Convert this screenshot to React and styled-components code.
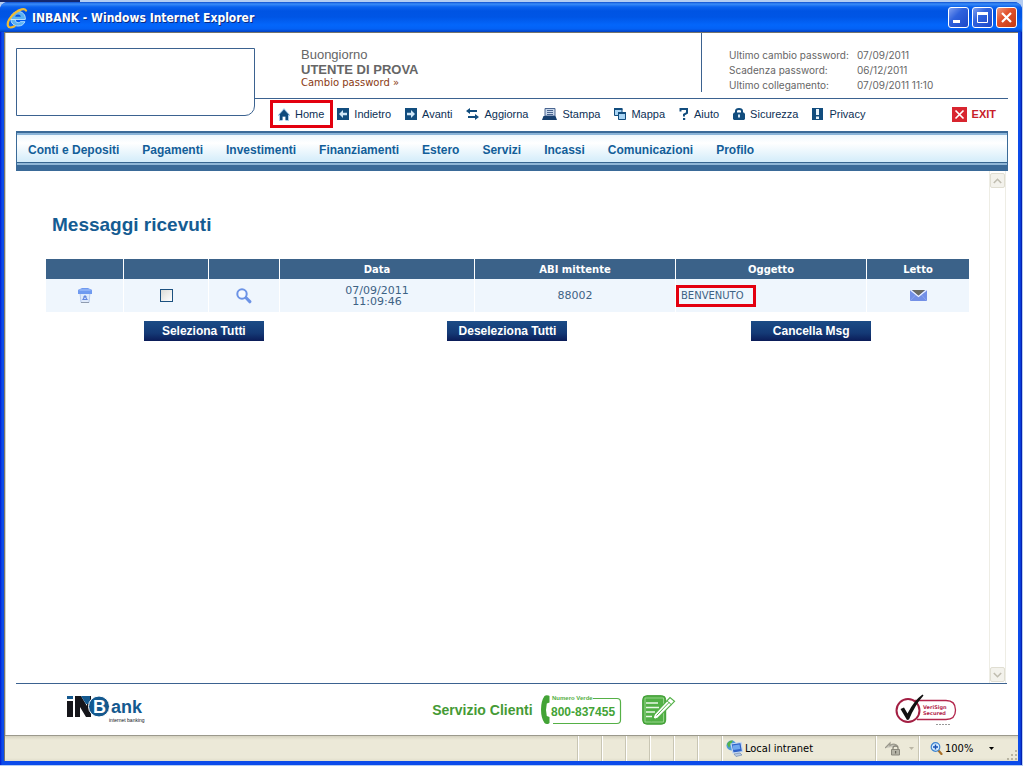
import styled, { createGlobalStyle, css } from "styled-components";

const GlobalStyle = createGlobalStyle`
  *, *::before, *::after {
    box-sizing: border-box;
  }
  body {
    margin: 0;
    background: #b4cdf2;
    font-family: "Liberation Sans", Arial, sans-serif;
    font-size: 11px;
    color: #0c3a66;
  }
  button {
    font: inherit;
    color: inherit;
    padding: 0;
    border: 0;
    background: none;
  }
  a {
    color: inherit;
    text-decoration: none;
  }
  svg {
    display: block;
    flex: none;
  }
`;

const messages = [
  { date: "07/09/2011", time: "11:09:46", abi: "88002", subject: "BENVENUTO" },
];

const columns = [
  { label: "", width: 77 },
  { label: "", width: 85 },
  { label: "", width: 71 },
  { label: "Data", width: 195 },
  { label: "ABI mittente", width: 201 },
  { label: "Oggetto", width: 191 },
  { label: "Letto", width: 103 },
];

const sections = [
  "Conti e Depositi",
  "Pagamenti",
  "Investimenti",
  "Finanziamenti",
  "Estero",
  "Servizi",
  "Incassi",
  "Comunicazioni",
  "Profilo",
];

const access = [
  ["Ultimo cambio password:", "07/09/2011"],
  ["Scadenza password:", "06/12/2011"],
  ["Ultimo collegamento:", "07/09/2011 11:10"],
];

/* ---------- icons ---------- */

const IeIcon = () => (
  <svg width="22" height="22" viewBox="0 0 22 22">
    <path d="M4.500 12.500h14.800c.5-5-3-8-7-8-4.300 0-7.500 3.200-7.500 7.300 0 4.300 3 7.200 7.400 7.200 3.200 0 5.600-1.500 6.700-4.300h-4.500c-.6.8-1.300 1-2.200 1-1.700 0-2.800-1-3-3.200z" fill="#5cb2f2" stroke="#bfe4ff" strokeWidth=".9" />
    <path d="M9.200 9.700c.3-1.400 1.300-2.200 2.800-2.200 1.600 0 2.600.8 2.800 2.200z" fill="#0a51dd" />
    <path d="M20 3.500C18.500.8 13.500 2.300 9 5.800 4 9.700.8 15.500 2 18.800c.8 2.300 3.800 2 6.500.5" fill="none" stroke="#f0bc35" strokeWidth="2.200" strokeLinecap="round" />
  </svg>
);

const HomeIcon = () => (
  <svg width="12" height="13" viewBox="0 0 12 13">
    <path d="M6 0 0 7v1h1v5h3.500V9h3v4H11V8h1V7z" fill="#a9cdea" />
    <path d="M6 1.500 1 7h1v5h2.500V8.500h3V12H10V7h1z" fill="#0f4a7c" />
  </svg>
);

const ArrowIcon = ({ right }) => (
  <svg width="12" height="12" viewBox="0 0 12 12">
    <path d="M0 0h12v12H0z" fill="#124d7e" />
    <path
      d="M2 6l4-4v2.700h4v2.600H6V10z"
      transform={right ? "rotate(180 6 6)" : undefined}
      fill="#cfe6f7"
    />
  </svg>
);

const RefreshIcon = () => (
  <svg width="13" height="12" viewBox="0 0 13 12">
    <path d="M4 0v2h7v2H4v2L0 3zM9 6v2H2v2h7v2l4-3z" fill="#124d7e" />
  </svg>
);

const PrintIcon = () => (
  <svg width="15" height="12" viewBox="0 0 15 12">
    <path d="M3 .5h10V8H3z" fill="#c8d7ea" stroke="#4a6590" />
    <path d="M5 2.500h6M5 4.500h6M5 6.500h6" stroke="#4a6590" />
    <path d="M1.500 8h12l1.500 4H0z" fill="#173f6e" />
  </svg>
);

const MapIcon = () => (
  <svg width="12" height="12" viewBox="0 0 12 12">
    <path d="M.5 1h7.500v6.500H.5z" fill="#a8d4f4" stroke="#124d7e" />
    <path d="M0 0h8.500v2H0z" fill="#124d7e" />
    <path d="M4.500 4.500h7v7h-7z" fill="#a8d4f4" stroke="#124d7e" />
    <path d="M4 4h8v2H4z" fill="#124d7e" />
  </svg>
);

const HelpIcon = () => (
  <svg width="10" height="12" viewBox="0 0 10 12">
    <path d="M1.500 3.500V1h6.500v4L5 6.500V8.500" fill="none" stroke="#124d7e" strokeWidth="2" />
    <path d="M4 10h2.200v2H4z" fill="#124d7e" />
  </svg>
);

const LockIcon = () => (
  <svg width="12" height="12" viewBox="0 0 12 12">
    <path d="M3 6V3q0-2 3-2t3 2v3" fill="none" stroke="#124d7e" strokeWidth="2" />
    <path d="M1 4.500h10L12 6v5l-1 1H1l-1-1V6z" fill="#124d7e" />
    <path d="M5 6.500h2v3H5z" fill="#cfe6f7" />
  </svg>
);

const PrivacyIcon = () => (
  <svg width="12" height="12" viewBox="0 0 12 12">
    <path d="M0 0h11v12H0z" fill="#124d7e" />
    <path d="M4 1h3v6H4zM4 8.500h3V11H4z" fill="#e8f3fb" />
  </svg>
);

const ExitIcon = () => (
  <svg width="15" height="15" viewBox="0 0 15 15">
    <path d="M0 0h15v15H0z" fill="#d8252f" />
    <path d="m3.500 3.500 8 8m0-8-8 8" stroke="#fff" strokeWidth="1.700" />
  </svg>
);

const TrashIcon = () => (
  <svg width="14" height="15" viewBox="0 0 14 15">
    <path d="M2 5h10l-1 9.500H3z" fill="#dfeafb" stroke="#a9bfe8" strokeWidth=".8" />
    <path d="M0 2.500Q0 1 2 1l2-1h6l2 1q2 0 2 1.500V6H0z" fill="#6f9af0" />
    <path d="M1.500 2h11" stroke="#a9c6fb" />
    <path d="m7 7 2 2-.7.6L10 12H4l1.500-2.400L5 9z" fill="#6487e0" />
    <path d="M6.200 9.700h1.600v1.300H6.200z" fill="#dfeafb" />
    <path d="M3 14.500h8" stroke="#8f9cb0" />
  </svg>
);

const SearchIcon = () => (
  <svg width="16" height="16" viewBox="0 0 16 16">
    <circle cx="6" cy="6" r="4.700" fill="#f6faff" stroke="#6c93e6" strokeWidth="2" />
    <path d="m10.300 10 3.500 3.700" stroke="#6c93e6" strokeWidth="3.200" strokeLinecap="round" />
  </svg>
);

const MailIcon = () => (
  <svg width="17" height="11" viewBox="0 0 17 11">
    <path d="M0 0h17v11H0z" fill="#7390e6" />
    <path d="M2 0h13L8.500 6z" fill="#6a6a62" />
    <path d="m.5 0 8 6.500 8-6.500" fill="none" stroke="#eef3ff" strokeWidth="1.200" />
    <path d="m0 11 5.500-6m11.500 6-5.500-6" stroke="#94abee" strokeWidth=".8" />
  </svg>
);

const InbankLogo = () => (
  <svg width="82" height="28" viewBox="0 0 82 28" role="img" aria-label="inBank internet banking">
    <path d="M0 0h6v3H0z" fill="#14598f" />
    <path d="M0 5h6v16H0z" fill="#15151a" />
    <path d="M8 0h6l6 10V0h4v21h-5l-6-10v10H8z" fill="#15151a" />
    <path d="M14 0h9v8h-4z" fill="#14598f" />
    <circle cx="32" cy="10.500" r="10.500" fill="#14598f" stroke="#fff" />
    <text x="26" y="17" fontFamily="Liberation Sans" fontWeight="700" fontSize="18" fill="#fff">B</text>
    <text x="44" y="17" fontFamily="Liberation Sans" fontWeight="700" fontSize="18" fill="#14598f">ank</text>
    <text x="42" y="26" fontFamily="Liberation Sans" fontSize="5" fill="#15151a">internet banking</text>
  </svg>
);

const PhoneBadge = () => (
  <svg width="81" height="32" viewBox="0 0 81 32" role="img" aria-label="Numero Verde 800-837455">
    <path d="M52 4.500h24q3.500 0 3.500 3.500v18q0 3.500-3.500 3.500H12" fill="none" stroke="#55b046" strokeWidth="1.200" />
    <path d="M3.500 2Q5 .8 7.500 1.500L8.500 2v6.500L5.800 9.500q-1.500 6 0 12.500L8.500 23v6l-1 .8Q5 30.500 3.500 29 0 24 0 15.500T3.500 2z" fill="#43a336" />
    <text x="11" y="6" fontFamily="Liberation Sans" fontWeight="700" fontSize="6" fill="#55b046">Numero Verde</text>
    <text x="10" y="22" fontFamily="Liberation Sans" fontWeight="700" fontSize="12" fill="#43a336">800-837455</text>
  </svg>
);

const NoteIcon = () => (
  <svg width="34" height="32" viewBox="0 0 34 32">
    <rect x=".7" y="1.700" width="23" height="28.500" rx="4" fill="#52b046" stroke="#3c9a31" />
    <path d="M3 4h18.500v24H3z" fill="none" stroke="#a5dc9b" strokeWidth=".8" />
    <path d="M4 9h12M4 13.500h13M4 18h9M4 22.500h6" stroke="#e9f8e6" strokeWidth="1.700" />
    <path d="M10 26.500 12.500 20 28 3.500l4.500 3.800L16 24z" fill="#fff" stroke="#52b046" strokeWidth="1.200" />
    <path d="m10 26.500 1-3 2 1.700zM25 6.800l4.500 4M14.500 21.500 27.500 8" fill="#3c9a31" stroke="#52b046" />
  </svg>
);

const VerisignSeal = () => (
  <svg width="62" height="34" viewBox="0 0 62 34" role="img" aria-label="VeriSign Secured">
    <path d="M20 7.500h31q9.500 0 9.500 9.500T51 26.500H22" fill="#fff" stroke="#b3264c" strokeWidth="1.300" />
    <circle cx="13" cy="17.500" r="11.500" fill="#fff" stroke="#a31f43" strokeWidth="2" />
    <path d="m5.500 16 3.500-1.500 3.500 6Q19 7.500 27.500 1.500l1 1Q20 12 14 26.500l-2 .5z" fill="#111" />
    <text x="28" y="16" fontFamily="DejaVu Sans" fontWeight="700" fontSize="5" fill="#b3264c">VeriSign</text>
    <text x="28" y="22" fontFamily="DejaVu Sans" fontWeight="700" fontSize="5" fill="#b3264c">Secured</text>
    <path d="M41 31.500h14" stroke="#999" strokeWidth="1" strokeDasharray="2 1" />
  </svg>
);

const IntranetIcon = () => (
  <svg width="17" height="17" viewBox="0 0 17 17">
    <circle cx="5.500" cy="5.500" r="5" fill="#4c9bdc" />
    <path d="M1 4q2-4 6-3.500L5 4 3 8zM6 6l3-3v6z" fill="#54b348" />
    <path d="M5 4 15 2.500l1.500 9L7 13z" fill="#2f62c8" stroke="#c3d7f2" strokeWidth="1.200" />
    <path d="m6.500 5.500 7-1 .8 4.500-7 1z" fill="#6fa7ee" />
    <path d="m8 14 6-1 2 2-6 1.500z" fill="#b9cbe4" stroke="#6580a8" strokeWidth=".6" />
  </svg>
);

const SecurityIcon = () => (
  <svg width="16" height="15" viewBox="0 0 16 15">
    <path d="M0 7 5 2v2.500q5-3 8 1" fill="#c9c7bc" stroke="#9a988c" strokeWidth="1.200" />
    <path d="M8 8.500V7q0-2 2.500-2T13 7v1.500" fill="none" stroke="#8a887c" strokeWidth="1.300" />
    <path d="M6.500 8.500h8v5.500h-8z" fill="#b5b3a6" stroke="#8a887c" />
    <path d="M10 10h1.200v2.500H10z" fill="#66645a" />
  </svg>
);

const ZoomIcon = () => (
  <svg width="13" height="13" viewBox="0 0 13 13">
    <path d="m8 8 3.500 4" stroke="#a8702a" strokeWidth="2.200" strokeLinecap="round" />
    <circle cx="5.500" cy="5" r="4.300" fill="#d4ecff" stroke="#3c83cf" strokeWidth="1.200" />
    <path d="M3 5h5M5.500 2.500v5" stroke="#1b53b4" strokeWidth="1.400" />
  </svg>
);

const Caret = ({ color }) => (
  <svg width="5" height="3" viewBox="0 0 5 3">
    <path d="M0 0h5L2.500 3z" fill={color} />
  </svg>
);

const Chevron = ({ down }) => (
  <svg width="9" height="6" viewBox="0 0 9 6">
    <path d={down ? "m.8 1 3.700 3.700L8.200 1" : "m.8 5 3.700-3.700L8.200 5"} fill="none" stroke="#c0bdb0" strokeWidth="1.600" />
  </svg>
);

const Grip = () => (
  <svg width="11" height="11" viewBox="0 0 11 11">
    <path d="M8 0h2v2H8zM4 4h2v2H4zM8 4h2v2H8zM0 8h2v2H0zM4 8h2v2H4zM8 8h2v2H8z" fill="#b8b4a2" />
  </svg>
);

const tools = [
  { label: "Indietro", icon: <ArrowIcon /> },
  { label: "Avanti", icon: <ArrowIcon right /> },
  { label: "Aggiorna", icon: <RefreshIcon /> },
  { label: "Stampa", icon: <PrintIcon /> },
  { label: "Mappa", icon: <MapIcon /> },
  { label: "Aiuto", icon: <HelpIcon /> },
  { label: "Sicurezza", icon: <LockIcon /> },
  { label: "Privacy", icon: <PrivacyIcon /> },
];

const App = () => {
  return (
    <Desktop>
      <GlobalStyle />
      <Window>
        <TitleBar>
          <IeIcon />
          <Title>INBANK - Windows Internet Explorer</Title>
          <WindowButton aria-label="Riduci">
            <svg width="19" height="19" viewBox="0 0 19 19">
              <path d="M4 12h7v3H4z" fill="#fff" />
            </svg>
          </WindowButton>
          <WindowButton aria-label="Ingrandisci">
            <svg width="19" height="19" viewBox="0 0 19 19">
              <path d="M4.500 5v9.500h10V5z" fill="none" stroke="#fff" />
              <path d="M4 4h11v3H4z" fill="#fff" />
            </svg>
          </WindowButton>
          <WindowButton $close aria-label="Chiudi">
            <svg width="19" height="19" viewBox="0 0 19 19">
              <path d="m5 5 9 9m0-9-9 9" stroke="#fff" strokeWidth="2.200" />
            </svg>
          </WindowButton>
        </TitleBar>

        <Client>
          <Header>
            <BankBox />
            <HeaderBody>
              <UserRow>
                <Greeting>
                  <p>Buongiorno</p>
                  <strong>UTENTE DI PROVA</strong>
                  <PasswordLink href="#password">Cambio password »</PasswordLink>
                </Greeting>
                <Access>
                  {access.map(([label, value]) => (
                    <div key={label}>
                      <dt>{label}</dt>
                      <dd>{value}</dd>
                    </div>
                  ))}
                </Access>
              </UserRow>
              <Toolbar>
                <Tool href="#home" $marked>
                  <HomeIcon />
                  Home
                </Tool>
                <ToolGroup>
                  {tools.map(({ label, icon }) => (
                    <Tool key={label} href={`#${label}`}>
                      {icon}
                      {label}
                    </Tool>
                  ))}
                </ToolGroup>
                <Exit href="#exit">
                  <ExitIcon />
                  EXIT
                </Exit>
              </Toolbar>
            </HeaderBody>
          </Header>

          <Nav>
            {sections.map((name) => (
              <a key={name} href={`#${name}`}>
                {name}
              </a>
            ))}
          </Nav>

          <Body>
            <Main>
              <h1>Messaggi ricevuti</h1>
              <MessageTable>
                <colgroup>
                  {columns.map((col, i) => (
                    <col key={i} width={col.width} />
                  ))}
                </colgroup>
                <thead>
                  <tr>
                    {columns.map((col, i) => (
                      <th key={i}>{col.label}</th>
                    ))}
                  </tr>
                </thead>
                <tbody>
                  {messages.map((msg) => (
                    <tr key={msg.time}>
                      <td>
                        <IconButton aria-label="Elimina">
                          <TrashIcon />
                        </IconButton>
                      </td>
                      <td>
                        <Check type="checkbox" aria-label="Seleziona messaggio" />
                      </td>
                      <td>
                        <IconButton aria-label="Visualizza">
                          <SearchIcon />
                        </IconButton>
                      </td>
                      <td>
                        {msg.date}
                        <br />
                        {msg.time}
                      </td>
                      <td>{msg.abi}</td>
                      <SubjectCell>
                        <Subject href="#messaggio">{msg.subject}</Subject>
                      </SubjectCell>
                      <td>
                        <IconButton aria-label="Letto">
                          <MailIcon />
                        </IconButton>
                      </td>
                    </tr>
                  ))}
                </tbody>
              </MessageTable>
              <Actions>
                <Action>Seleziona Tutti</Action>
                <Action>Deseleziona Tutti</Action>
                <Action>Cancella Msg</Action>
              </Actions>
            </Main>
            <ScrollBar>
              <ScrollButton aria-label="Su">
                <Chevron />
              </ScrollButton>
              <ScrollButton aria-label="Giù">
                <Chevron down />
              </ScrollButton>
            </ScrollBar>
          </Body>

          <Footer>
            <InbankLogo />
            <Support>
              <span>Servizio Clienti</span>
              <PhoneBadge />
              <NoteIcon />
            </Support>
            <VerisignSeal />
          </Footer>

          <StatusBar>
            <StatusText />
            {[0, 1, 2, 3, 4, 5].map((n) => (
              <Panel key={n} $width={24} />
            ))}
            <Panel $width={154}>
              <IntranetIcon />
              Local intranet
            </Panel>
            <Panel $width={43} $pad={9} $gap={8}>
              <SecurityIcon />
              <Caret color="#bab6a5" />
            </Panel>
            <Panel $width={100} $pad={11}>
              <ZoomIcon />
              <ZoomLevel>100%</ZoomLevel>
              <Caret color="#000" />
              <GripCorner>
                <Grip />
              </GripCorner>
            </Panel>
          </StatusBar>
        </Client>
      </Window>
    </Desktop>
  );
};

const Desktop = styled.div`
  display: flex;
  min-height: 100vh;
  padding: 2px 1px 1px 0;
  background: linear-gradient(to right, #14286e 80px, #b4cdf2 80px) top / 100% 2px no-repeat;
`;

const Window = styled.div`
  flex: 1;
  display: flex;
  flex-direction: column;
  min-width: 0;
  padding: 0 4px 4px;
  background: linear-gradient(to right, #0019cf 0, #0c4bea 2px, #0c4bea calc(100% - 2px), #0012a0 100%);
  border-radius: 8px 8px 0 0;
  overflow: hidden;
`;

const TitleBar = styled.header`
  display: flex;
  align-items: center;
  gap: 2px;
  height: 30px;
  margin: 0 -4px;
  padding: 1px 5px 0 6px;
  background: linear-gradient(
    #0f4fd0 0,
    #3a8cf8 2px,
    #0b62ee 5px,
    #0054e3 9px,
    #0055e5 15px,
    #0366fb 23px,
    #0361f5 27px,
    #0340c0 30px
  );
`;

const Title = styled.span`
  flex: 1;
  padding-left: 2px;
  font-family: "DejaVu Sans Condensed", sans-serif;
  font-size: 12px;
  font-weight: 700;
  color: #fff;
  text-shadow: 1px 1px 0 #0a2a80;
`;

const WindowButton = styled.button`
  width: 21px;
  height: 21px;
  margin-left: 1px;
  border: 1px solid #fff;
  border-radius: 3px;
  background: ${({ $close }) =>
    $close
      ? "linear-gradient(135deg, #ee9a80, #e2522c 40%, #c23a12)"
      : "linear-gradient(135deg, #7f9ff0, #2f62dd 40%, #1c48c8)"};
`;

const Client = styled.div`
  flex: 1;
  display: flex;
  flex-direction: column;
  background: #fff;
  border: solid #77756c;
  border-width: 1px 0 0 1px;
  box-shadow: inset 1px 0 0 #d8d5c8;
`;

const Header = styled.div`
  display: grid;
  grid-template-columns: 239px 1fr;
  padding: 0 10px 0 11px;
`;

const BankBox = styled.div`
  height: 68px;
  margin-top: 15px;
  border: 1px solid #3b6290;
  border-bottom-right-radius: 10px;
`;

const HeaderBody = styled.div`
  min-width: 0;
`;

const UserRow = styled.div`
  display: flex;
  justify-content: space-between;
  height: 66px;
  border-bottom: 1px solid #3b6290;
`;

const Greeting = styled.div`
  display: flex;
  flex-direction: column;
  padding: 14px 0 0 46px;
  font-size: 13px;
  line-height: 15px;
  color: #666;

  p {
    margin: 0;
  }
`;

const PasswordLink = styled.a`
  font-family: "DejaVu Sans", Verdana, sans-serif;
  font-size: 10px;
  line-height: 12px;
  color: #8a3a12;
`;

const Access = styled.dl`
  width: 307px;
  height: 59px;
  margin: 0;
  padding: 15px 0 0 27px;
  border-left: 1px solid #3b6290;
  font-family: Inter, sans-serif;
  font-size: 10px;
  line-height: 15px;
  color: #666;

  div {
    display: flex;
  }
  dt {
    width: 128px;
  }
  dd {
    margin: 0;
  }
`;

const Toolbar = styled.nav`
  display: flex;
  align-items: center;
  height: 30px;
  margin-bottom: 2px;
  padding: 0 12px 0 15px;
`;

const ToolGroup = styled.div`
  display: flex;
  gap: 14px;
  margin-left: 4px;
`;

const Tool = styled.a`
  display: flex;
  align-items: center;
  gap: 5px;
  color: #0c2f55;

  ${({ $marked }) =>
    $marked &&
    css`
      height: 28px;
      padding: 0 6px 0 5px;
      border: 3px solid #e3000f;
    `}
`;

const Exit = styled(Tool)`
  margin-left: auto;
  color: #c8202a;
  font-weight: 700;
`;

const Nav = styled.nav`
  display: flex;
  align-items: center;
  gap: 23px;
  height: 40px;
  margin: 0 10px 0 11px;
  padding: 2px 11px 0;
  border: solid #3a6a98;
  border-width: 2px 1px 6px;
  background: linear-gradient(
    #8ab4d8 0,
    #8ab4d8 2px,
    #edf7fd 2px,
    #ffffff 10px,
    #d3ecfa 29px,
    #35648f 29px,
    #35648f 30px,
    #8fb6d6 30px,
    #8fb6d6 32px
  );
  font-size: 12px;
  font-weight: 700;
  color: #135e99;
`;

const Body = styled.div`
  flex: 1;
  display: flex;
  margin: 0 11px;
  border-bottom: 1px solid #3b6290;
`;

const Main = styled.main`
  flex: 1;
  min-width: 0;
  padding: 42px 20px 0 30px;

  h1 {
    margin: 0 0 22px 6px;
    font-size: 19px;
    line-height: 24px;
    color: #155c92;
  }
`;

const MessageTable = styled.table`
  width: 100%;
  table-layout: fixed;
  border-collapse: separate;
  border-spacing: 0;
  font-family: "DejaVu Sans", Verdana, sans-serif;
  font-size: 11px;
  line-height: 11px;
  text-align: center;
  color: #3d6284;

  th {
    height: 20px;
    padding: 0;
    background: #3b6289;
    color: #fff;
    font-size: 10px;
  }
  td {
    height: 33px;
    padding: 0;
    background: #eff6fd;
  }
  th + th,
  td + td {
    border-left: 1px solid #fff;
  }
`;

const IconButton = styled.button`
  display: inline-block;
  vertical-align: middle;
`;

const Check = styled.input`
  appearance: none;
  width: 13px;
  height: 13px;
  margin: 0;
  vertical-align: middle;
  border: 1px solid #1c5180;
  background: linear-gradient(135deg, #dcdcd7, #fff);
`;

const SubjectCell = styled.td`
  text-align: left;
`;

const Subject = styled.a`
  display: inline-block;
  width: 80px;
  padding: 3px 2px;
  border: 3px solid #e3000f;
  vertical-align: middle;
  font-size: 10px;
  line-height: 10px;
`;

const Actions = styled.div`
  display: grid;
  grid-template-columns: repeat(3, 1fr);
  justify-items: center;
  margin-top: 9px;
  padding: 0 6px;
`;

const Action = styled.button`
  width: 120px;
  height: 20px;
  background: linear-gradient(#1b4c86, #143a76 60%, #0b1c58);
  color: #fff;
  font-size: 12px;
  font-weight: 700;
`;

const ScrollBar = styled.div`
  display: flex;
  flex-direction: column;
  justify-content: space-between;
  width: 17px;
  margin-right: 1px;
  padding: 2px 0 1px;
  border: solid #eeede5;
  border-width: 0 1px;
`;

const ScrollButton = styled.button`
  display: grid;
  place-items: center;
  height: 15px;
  border: 1px solid #e0ded2;
  border-radius: 2px;
  background: #f3f2ec;
`;

const Footer = styled.footer`
  display: grid;
  grid-template-columns: 42% 1fr auto;
  align-items: center;
  height: 51px;
  margin: 0 11px;

  > :first-child {
    margin-left: 51px;
  }
  > :last-child {
    margin-right: 50px;
  }
`;

const Support = styled.div`
  display: flex;
  align-items: center;
  font-size: 14px;
  font-weight: 700;
  color: #459a35;

  span {
    margin-right: 8px;
  }
  svg + svg {
    margin-left: 20px;
  }
`;

const StatusBar = styled.div`
  display: flex;
  height: 26px;
  border-top: 1px solid #9b998c;
  background: linear-gradient(#d5d2c0, #ece9d8 4px, #ece9d8 22px, #e0ddcb);
  font-family: "DejaVu Sans Condensed", Tahoma, sans-serif;
  color: #000;
`;

const StatusText = styled.div`
  flex: 1;
`;

const Panel = styled.div`
  position: relative;
  display: flex;
  align-items: center;
  gap: ${({ $gap = 2 }) => $gap}px;
  width: ${({ $width }) => $width}px;
  padding-left: ${({ $pad = 4 }) => $pad}px;
  border-left: 1px solid #c9c6b4;
  box-shadow: inset 1px 0 0 #fff;
`;

const ZoomLevel = styled.span`
  width: 42px;
`;

const GripCorner = styled.span`
  position: absolute;
  right: 0;
  bottom: 0;
`;

export default App;
